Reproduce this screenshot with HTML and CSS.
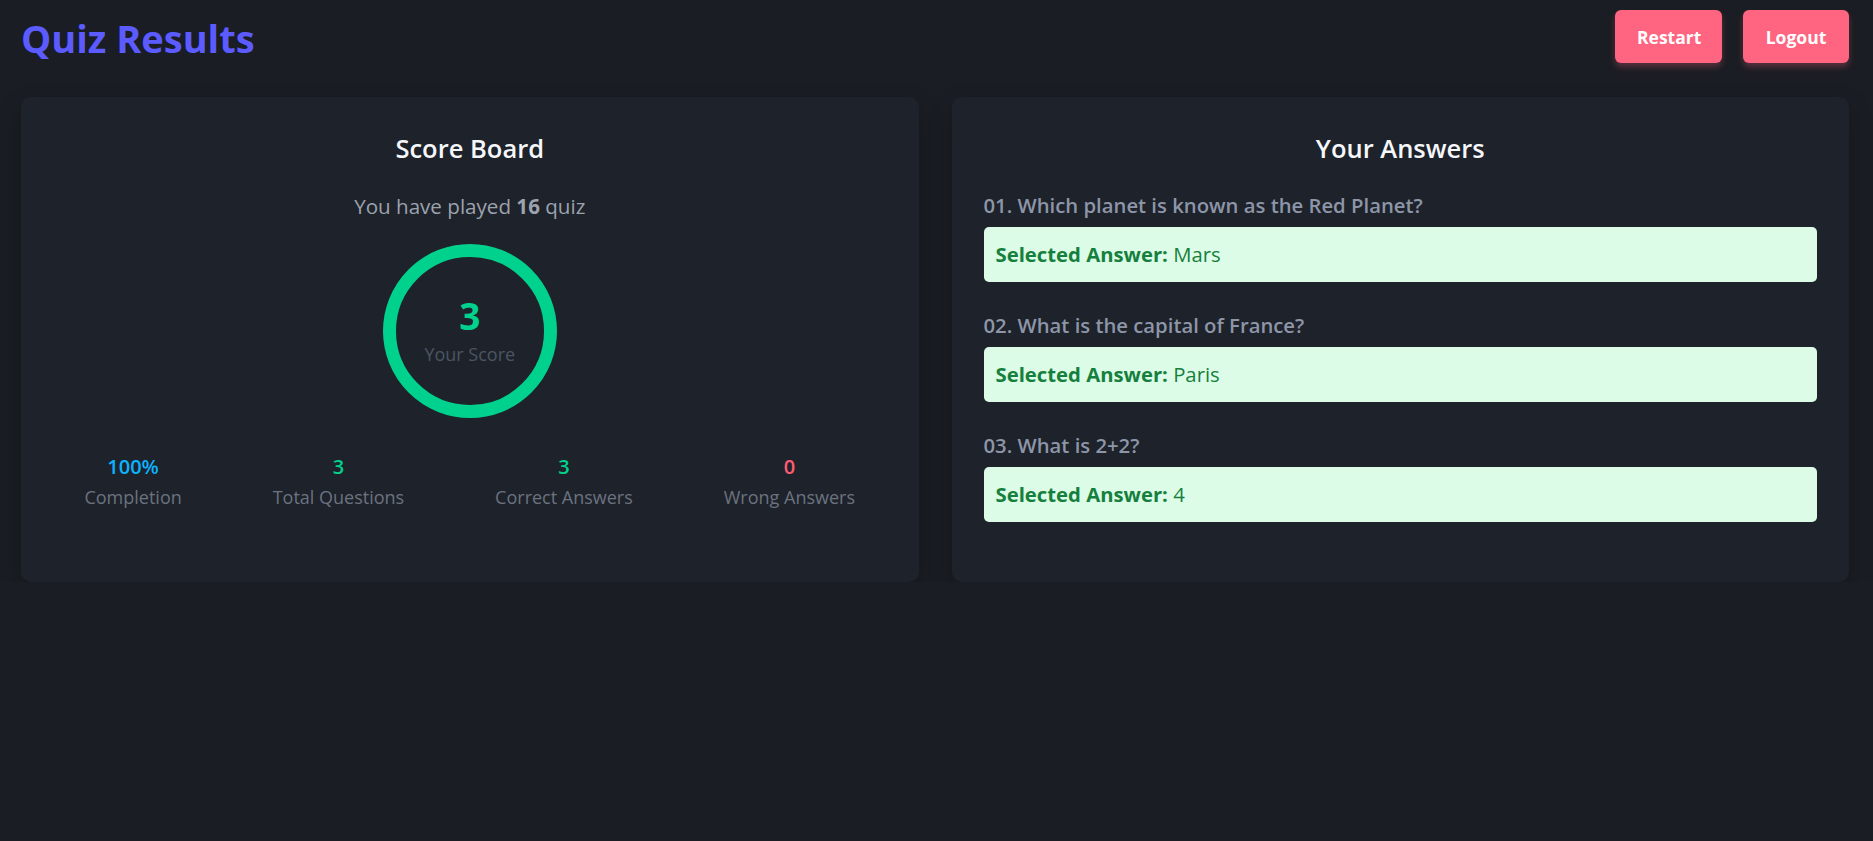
FILE: index.html
```html
<!DOCTYPE html>
<html lang="en">
<head>
<meta charset="utf-8">
<title>Quiz Results</title>
<link rel="stylesheet" href="styles.css">
</head>
<body>
<header class="topbar">
  <h1 class="title">Quiz Results</h1>
  <div class="actions">
    <button class="btn">Restart</button>
    <button class="btn">Logout</button>
  </div>
</header>
<main class="grid">
  <section class="card score-card">
    <h2 class="card-title">Score Board</h2>
    <p class="played">You have played <strong>16</strong> quiz</p>
    <div class="ring">
      <svg class="ring-svg" width="174" height="174" viewBox="0 0 174 174">
        <circle cx="87" cy="87" r="80.5" fill="none" stroke="#00d18c" stroke-width="13"/>
      </svg>
      <div class="ring-text">
        <span class="ring-value">3</span>
        <span class="ring-label">Your Score</span>
      </div>
    </div>
    <div class="stats">
      <div class="stat"><span class="stat-value blue">100%</span><span class="stat-label">Completion</span></div>
      <div class="stat"><span class="stat-value green">3</span><span class="stat-label">Total Questions</span></div>
      <div class="stat"><span class="stat-value green">3</span><span class="stat-label">Correct Answers</span></div>
      <div class="stat"><span class="stat-value red">0</span><span class="stat-label">Wrong Answers</span></div>
    </div>
  </section>
  <section class="card answers-card">
    <h2 class="card-title">Your Answers</h2>
    <ol class="answers">
      <li class="answer">
        <p class="question">01. Which planet is known as the Red Planet?</p>
        <div class="selected"><strong>Selected Answer:</strong> Mars</div>
      </li>
      <li class="answer">
        <p class="question">02. What is the capital of France?</p>
        <div class="selected"><strong>Selected Answer:</strong> Paris</div>
      </li>
      <li class="answer">
        <p class="question">03. What is 2+2?</p>
        <div class="selected"><strong>Selected Answer:</strong> 4</div>
      </li>
    </ol>
  </section>
</main>
</body>
</html>
```
FILE: styles.css
```css
* { box-sizing: border-box; }

html, body {
  margin: 0;
  background: #1a1d23;
  font-family: "Open Sans", "Noto Sans", sans-serif;
  color: #e5e7eb;
}

.topbar {
  display: flex;
  justify-content: space-between;
  align-items: center;
  padding: 10px 24px 0 21px;
}

.title {
  margin: 0 0 -2px;
  padding-top: 2px;
  font-size: 38px;
  font-weight: 700;
  color: #5b5bff;
  line-height: 53px;
}

.actions {
  display: flex;
  gap: 21px;
}

.btn {
  height: 53px;
  padding: 0 22px;
  border: none;
  border-radius: 6px;
  background: #ff6480;
  color: #ffffff;
  font-family: inherit;
  font-size: 17.5px;
  font-weight: 700;
  box-shadow: 0 4px 6px rgba(255, 100, 128, 0.28);
}

.btn:first-child { width: 107px; }
.btn:last-child { width: 106px; }

.grid {
  display: grid;
  grid-template-columns: 1fr 1fr;
  gap: 33px;
  margin-top: 34px;
  padding: 0 24px 0 21px;
}

.card {
  background: #1e222a;
  border-radius: 10px;
  padding: 33px 32px 33px;
  box-shadow: 0 10px 25px rgba(0, 0, 0, 0.22);
}

.card-title {
  margin: 0;
  text-align: center;
  font-size: 25.5px;
  font-weight: 600;
  line-height: 37px;
  color: #f5f7fa;
}

.score-card {
  display: flex;
  flex-direction: column;
  align-items: center;
}

.played {
  margin: 24px 0 0;
  font-size: 20.6px;
  line-height: 30px;
  color: #9ca3af;
}

.played strong { font-weight: 700; }

.ring {
  position: relative;
  width: 174px;
  height: 174px;
  margin-top: 23px;
}

.ring-svg { display: block; }

.ring-text {
  position: absolute;
  inset: 0;
  display: flex;
  flex-direction: column;
  align-items: center;
  justify-content: center;
  padding-top: 9px;
}

.ring-value {
  font-size: 37px;
  font-weight: 700;
  line-height: 42px;
  color: #00d18c;
  margin-top: -10px;
  margin-bottom: 5px;
}

.ring-label {
  font-size: 18px;
  line-height: 24px;
  color: #4b5563;
}

.stats {
  display: flex;
  justify-content: space-around;
  align-self: stretch;
  margin: 34px -14px 0;
}

.stat {
  display: flex;
  flex-direction: column;
  align-items: center;
}

.stat-value {
  font-size: 20px;
  font-weight: 600;
  line-height: 30px;
}

.stat-label {
  font-size: 18px;
  line-height: 30px;
  color: #6b7280;
}

.blue { color: #0bb3ff; }
.green { color: #00d18c; }
.red { color: #ff5c74; }

.answers {
  list-style: none;
  margin: 23px 0 0;
  padding: 0;
}

.answer { margin-bottom: 28px; }
.answer:last-child { margin-bottom: 27px; }

.question {
  margin: 0 0 7px;
  font-size: 20.3px;
  font-weight: 600;
  line-height: 30px;
  color: #8d96a8;
}

.selected {
  background: #dcfce7;
  border-radius: 5px;
  padding: 12px;
  font-size: 20.3px;
  line-height: 31px;
  color: #15803d;
}

.selected strong { font-weight: 700; }
```
